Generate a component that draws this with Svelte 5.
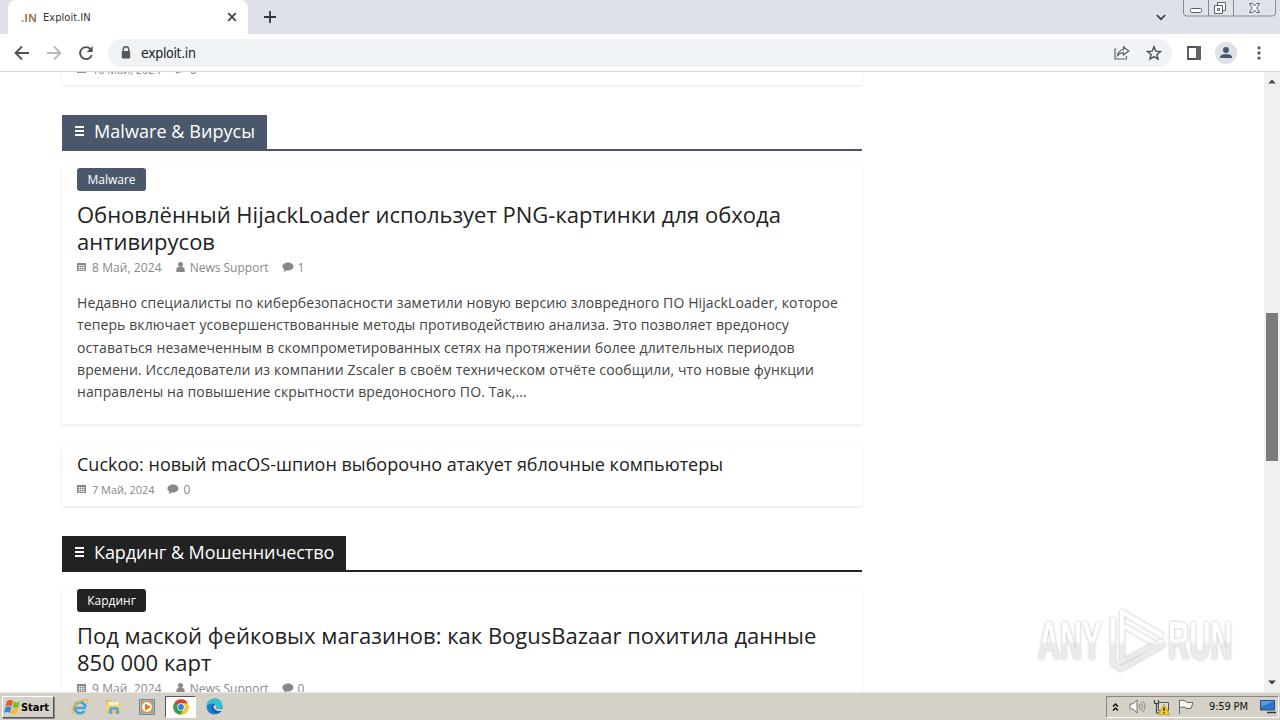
<!--
    Browser window on a remote desktop: tab strip, toolbar,
    scrolled news page and the taskbar below it.
-->
<script>
    const sections = [
        {
            name: 'Malware & Вирусы',
            tone: 'slate',
            tag: 'Malware',
            title: ['Обновлённый HijackLoader использует PNG-картинки для обхода', 'антивирусов'],
            date: '8 Май, 2024',
            comments: 1,
            text: [
                'Недавно специалисты по кибербезопасности заметили новую версию зловредного ПО HijackLoader, которое',
                'теперь включает усовершенствованные методы противодействию анализа. Это позволяет вредоносу',
                'оставаться незамеченным в скомпрометированных сетях на протяжении более длительных периодов',
                'времени. Исследователи из компании Zscaler в своём техническом отчёте сообщили, что новые функции',
                'направлены на повышение скрытности вредоносного ПО. Так,...'
            ],
            next: {
                title: 'Cuckoo: новый macOS-шпион выборочно атакует яблочные компьютеры',
                date: '7 Май, 2024',
                comments: 0
            }
        },
        {
            name: 'Кардинг & Мошенничество',
            tone: 'dark',
            tag: 'Кардинг',
            title: ['Под маской фейковых магазинов: как BogusBazaar похитила данные', '850 000 карт'],
            date: '9 Май, 2024',
            comments: 0,
            text: []
        }
    ];
</script>

{#snippet meta(date, author, comments)}
    <div class="meta">
        <svg class="cal" width="9" height="8" viewBox="0 0 9 8"><path d="M0 0h9v8H0z" fill="#888" /><path d="M1 2.500h7M1 4.500h7M1 6.500h7M2.500 2v5.500M4.500 2v5.500M6.500 2v5.500" stroke="#fff" stroke-width=".5" /></svg>
        <span class="date">{date}</span>
        {#if author}
            <svg class="user" width="9" height="10" viewBox="0 0 9 10"><circle cx="4.500" cy="2.600" r="2.500" fill="#888" /><path d="M.3 10V7.500Q.5 5 2.500 5h4q2 0 2.200 2.500V10z" fill="#888" /></svg>
            <span class="author">{author}</span>
        {/if}
        <svg class="bubble" width="12" height="10" viewBox="0 0 12 10"><path d="M6 .5c3 0 5.500 1.700 5.500 4S9 8.500 6 8.500L4.500 8.400Q3 9.800 1.500 10q1-1 .9-2.300Q.4 6.500.4 4.500C.4 2.200 3 .5 6 .5z" fill="#888" /></svg>
        <span>{comments}</span>
    </div>
{/snippet}

<div class="screen">
    <header class="tabs">
        <div class="tab">
            <span class="favicon">.IN</span>
            <span class="tab-title">Exploit.IN</span>
            <svg width="10" height="10" viewBox="0 0 10 10"><path d="M1.200 1.200l7.600 7.600M8.800 1.200L1.200 8.800" stroke="#3c4043" stroke-width="1.700" /></svg>
        </div>
        <svg class="plus" width="12" height="12" viewBox="0 0 12 12"><path d="M6 0v12M0 6h12" stroke="#33363a" stroke-width="1.800" /></svg>
        <svg class="chevron" width="10" height="7" viewBox="0 0 10 7"><path d="M.8 1L5 5.200 9.200 1" fill="none" stroke="#3c4043" stroke-width="1.700" /></svg>
        <svg class="controls" width="94" height="18" viewBox="0 0 94 18">
            <path d="M.5 0v13q0 3 3 3h86q3 0 3-3V0M25.500 0v16M50.500 0v16" fill="#e0e3e9" stroke="#858b95" />
            <rect x="7.500" y="8.500" width="11" height="4" rx="1" fill="#fff" stroke="#5b626c" />
            <path d="M34.500 2.500h8v8h-8z" fill="#fff" stroke="#5b626c" />
            <path d="M31.500 5.500h8v8h-8z" fill="#fff" stroke="#5b626c" />
            <path d="M34.500 8.500h2v2h-2z" fill="#fff" stroke="#5b626c" />
            <path d="M66.500 3.500h3l2 2.500 2-2.500h3L73.700 8l2.800 4.500h-3l-2-2.500-2 2.500h-3L69.300 8z" fill="#fff" stroke="#5b626c" />
        </svg>
    </header>

    <nav class="toolbar">
        <svg class="back" width="16" height="16" viewBox="0 0 16 16"><path d="M15 8H2M8 1.500L1.600 8 8 14.500" fill="none" stroke="#505357" stroke-width="1.900" /></svg>
        <svg class="forward" width="16" height="16" viewBox="0 0 16 16"><path d="M1 8h13M8 1.500L14.400 8 8 14.500" fill="none" stroke="#b7b9bc" stroke-width="1.800" /></svg>
        <svg class="reload" width="16" height="16" viewBox="0 0 16 16"><path d="M13.800 10A6 6 0 1 1 12.400 3.900" fill="none" stroke="#505357" stroke-width="1.900" /><path d="M14.700 1v6H8.700z" fill="#505357" /></svg>
        <div class="omnibox">
            <svg width="10" height="13" viewBox="0 0 10 13"><path d="M2.300 6V3.500a2.700 2.700 0 0 1 5.400 0V6" fill="none" stroke="#55585d" stroke-width="1.400" /><rect x=".8" y="5" width="8.400" height="7.500" rx="1" fill="#55585d" /></svg>
            <span class="url">exploit.in</span>
            <svg class="share" width="16" height="15" viewBox="0 0 16 15"><path d="M2.500 4H1v10h11.500v-3" fill="none" stroke="#5f6368" stroke-width="1.200" /><path d="M3.500 10.500Q4 5.500 9.500 4.500V1.800l5.300 4.300-5.300 4V7.600Q6 7.500 3.500 10.500z" fill="none" stroke="#5f6368" stroke-width="1.200" /></svg>
            <svg class="star" width="16" height="16" viewBox="0 0 16 16"><path d="M8 1.800l1.800 4.300 4.700.4-3.600 3 1.100 4.600-4-2.500-4 2.500 1.100-4.600-3.600-3 4.700-.4z" fill="none" stroke="#4a4e53" stroke-width="1.400" /></svg>
        </div>
        <svg class="panel" width="14" height="14" viewBox="0 0 14 14"><path d="M1 1h12v12H1z" fill="#fff" stroke="#4e5155" stroke-width="1.800" /><path d="M9 0h5v14H9z" fill="#5f6368" /></svg>
        <svg class="avatar" width="22" height="22" viewBox="0 0 22 22"><circle cx="11" cy="11" r="11" fill="#dee1e6" /><circle cx="11" cy="8" r="3" fill="#4b5672" /><path d="M5 16v-1.500Q6 12 11 12t6 2.500V16z" fill="#4b5672" /></svg>
        <svg class="dots" width="4" height="14" viewBox="0 0 4 14"><path d="M.6.500h2.800v2.800H.6zM.6 5.600h2.800v2.800H.6zM.6 10.700h2.800v2.800H.6z" fill="#55585d" /></svg>
    </nav>

    <div class="viewport">
        <main class="page">
            <article class="card leftover">
                {@render meta('10 Май, 2024', '', 0)}
            </article>
            {#each sections as s}
                <section class={s.tone}>
                    <h3 class="heading">
                        <span class="label">
                            <svg width="9" height="10" viewBox="0 0 9 10"><path d="M0 1h9M0 5h9M0 9h9" stroke="#fff" stroke-width="2" /></svg>
                            <span class="name">{s.name}</span>
                        </span>
                    </h3>
                    <article class="card lead">
                        <span class="tag">{s.tag}</span>
                        <h2>{#each s.title as line}<span class="line">{line}</span>{/each}</h2>
                        {@render meta(s.date, 'News Support', s.comments)}
                        <p>{#each s.text as line}<span class="line">{line}</span>{/each}</p>
                    </article>
                    {#if s.next}
                        <article class="card small">
                            <h4>{s.next.title}</h4>
                            {@render meta(s.next.date, '', s.next.comments)}
                        </article>
                    {/if}
                </section>
            {/each}
        </main>
        <aside class="scrollbar">
            <svg width="8" height="5" viewBox="0 0 8 5"><path d="M0 4.500L4 .5l4 4z" fill="#505050" /></svg>
            <div class="thumb"></div>
            <svg width="8" height="5" viewBox="0 0 8 5"><path d="M0 .5l4 4 4-4z" fill="#404040" /></svg>
        </aside>
        <svg class="watermark" width="210" height="80" viewBox="0 0 210 80">
            <defs>
                <linearGradient id="fade" x1="0" y1="0" x2="0" y2="80" gradientUnits="userSpaceOnUse">
                    <stop offset=".5" stop-color="#fff" />
                    <stop offset=".56" stop-color="#ebebeb" />
                </linearGradient>
            </defs>
            <text x="8" y="59" textLength="64" lengthAdjust="spacingAndGlyphs">ANY</text>
            <text x="138" y="59" textLength="64" lengthAdjust="spacingAndGlyphs">RUN</text>
            <g class="play">
                <path d="M83 19v45l8 5 42-24" />
                <path d="M131 35L92 12v49l39-19M96 27l33 19" />
            </g>
        </svg>
    </div>

    <footer class="taskbar">
        <div class="start">
            <svg width="17" height="16" viewBox="0 0 17 16"><path d="M3 2q3-2 6 0L7.500 7.500q-3-2-6 0z" fill="#e85b25" /><path d="M10 2.500q3 2 6 0L14.500 8q-3 2-6 0z" fill="#78b83b" /><path d="M1.300 8.500q3-2 6 0L6 14q-3-2-6 0z" fill="#3c86d4" /><path d="M8.300 9q3 2 6 0L13 14.500q-3 2-6 0z" fill="#f8bd27" /></svg>
            <b>Start</b>
        </div>
        <svg class="ie" width="18" height="18" viewBox="0 0 18 18"><path d="M14.800 10H5.300M14.500 8.800A5.500 5.500 0 1 0 13.500 13" fill="none" stroke="#39a5dc" stroke-width="2.700" /><path d="M2 15.500C-1 14 3 6 10 3s8-1 6 2.500" fill="none" stroke="#e8b53a" stroke-width="1.400" /></svg>
        <svg class="folder" width="17" height="17" viewBox="0 0 17 17"><path d="M1 2h5l1.500 2H15v11H1z" fill="#dfc066" /><path d="M3 4h11v5H3z" fill="#faf2c7" /><path d="M1 7h15v6H1z" fill="#f2d578" /><path d="M4 16v-5q0-2 2-2h6q2 0 2 2v5h-3v-4H7v4z" fill="#62acd4" /></svg>
        <svg class="media" width="16" height="16" viewBox="0 0 16 16"><path d="M.5.500h15v15H.5z" fill="#89bde2" stroke="#578eb9" /><path d="M2 2h12v12H2z" fill="#f18a20" /><circle cx="8" cy="8" r="5" fill="#fff" /><path d="M6 4.500v7L12 8z" fill="#ed7716" /></svg>
        <div class="active">
            <svg width="16" height="16" viewBox="0 0 16 16"><circle cx="8" cy="8" r="7.700" fill="#e5b723" /><path d="M8 8L1.300 4.100A7.700 7.700 0 0 1 14.800 4.400H8z" fill="#d94335" /><path d="M1.300 4.100A7.700 7.700 0 0 0 7.500 15.700L11 9.800 8 8z" fill="#319e50" /><path d="M8 4.400h6.800A7.700 7.700 0 0 1 7.500 15.700L11.200 9.800z" fill="#f6c534" /><circle cx="8" cy="8" r="3.700" fill="#fff" /><circle cx="8" cy="8" r="2.900" fill="#397fe0" /></svg>
        </div>
        <svg class="edge" width="17" height="17" viewBox="0 0 17 17"><circle cx="8.500" cy="8.500" r="8" fill="#1680cf" /><path d="M.7 7C2-1.500 16-1.500 16.400 7q0 4-4.400 4-3 0-2-2.500Q10 6 7 5.500 3 5 .7 8z" fill="#36bfcf" /><path d="M7.500 6Q3 10 8.500 14.500l5 .3q2-1.300 2.500-3-3 2-6 .5T8 8z" fill="#155aab" /><path d="M8 7.500q1.500-1 2.300.4Q9 10.500 11.700 11H16v1.800q-4.500 1-7-1.300T8 7.500z" fill="#d6d3cc" /></svg>
        <div class="tray">
            <svg width="7" height="10" viewBox="0 0 7 10"><path d="M1 4.500L3.500 2 6 4.500M1 8.500L3.500 6 6 8.500" fill="none" stroke="#111" stroke-width="1.500" /></svg>
            <svg class="sound" width="17" height="15" viewBox="0 0 17 15"><path d="M1 5h3l4-4v13l-4-4H1z" fill="#fafafa" stroke="#777" /><path d="M10 5q1.500 2.500 0 5M12 3.500q3 4 0 8M14 2q4 5.500 0 11" fill="none" stroke="#888" /></svg>
            <svg class="net" width="17" height="16" viewBox="0 0 17 16"><path d="M5.500 3.500h10v8h-10z" fill="#d9dde0" stroke="#555" /><path d="M1.500 1v3.500h4V1M3.500 5v9h4" fill="none" stroke="#444" stroke-width="1.200" /><path d="M11 5l5.500 10.500h-11z" fill="#f6cd27" stroke="#bb9212" stroke-width=".7" /><path d="M11 8.500V12M11 13v1.300" stroke="#222" stroke-width="1.300" /></svg>
            <svg class="flag" width="17" height="16" viewBox="0 0 17 16"><path d="M1.500 1v14M2 1.500q3-1 5 .5t3 1.500h5l-2 6H9Q7 7 2 8.500" fill="#f6f6f4" stroke="#666" /></svg>
            <span class="clock">9:59 PM</span>
            <svg class="desk" width="16" height="14" viewBox="0 0 16 14"><path d="M.5.500h14v9.500H.5z" fill="#2f73c5" stroke="#244f86" /><path d="M1 1h13L1 7z" fill="#5c9ae0" /><path d="M7 12.500h9" stroke="#333" stroke-width="1.500" /></svg>
        </div>
    </footer>
</div>

<style>
    :global(body) { background: #fff; }

    .screen {
        display:        flex;
        flex-direction: column;
        width:          1280px;
        height:         720px;
        overflow:       hidden;
        font-family:    "Open Sans", sans-serif;
    }

    svg { display: block; flex: none; }
    span, b { white-space: nowrap; }

    .tabs {
        display:    flex;
        height:     34px;
        background: #dee1e8;
        flex:       none;
    }

    .tab {
        display:       flex;
        align-items:   center;
        box-sizing:    border-box;
        width:         240px;
        margin-left:   8px;
        padding:       0 11px 0 13px;
        border-radius: 8px 8px 0 0;
        background:    #fff;
    }

    .favicon {
        width:          22px;
        color:          #9a7854;
        font:           bold 11px "Open Sans", sans-serif;
        letter-spacing: .1px;
    }

    .tab-title {
        flex:           1;
        color:          #333;
        font:           11px "DejaVu Sans Condensed", "DejaVu Sans", sans-serif;
        letter-spacing: .05px;
    }

    .plus     { margin: 11px 0 0 16px; }
    .chevron  { margin: 14px 0 0 880px; }
    .controls { margin-left: 17px; }

    .toolbar {
        display:       flex;
        align-items:   center;
        box-sizing:    border-box;
        height:        38px;
        padding-left:  14px;
        border-bottom: 1px solid #d5d7da;
        background:    #fff;
        flex:          none;
    }

    .forward, .reload { margin-left: 16px; }

    .omnibox {
        display:       flex;
        align-items:   center;
        box-sizing:    border-box;
        width:         1064px;
        height:        28px;
        margin-left:   14px;
        padding:       0 10px 0 13px;
        border-radius: 14px;
        background:    #f0f3f5;
    }

    .url {
        flex:           1;
        margin-left:    10px;
        color:          #202124;
        font:           14px "DejaVu Sans Condensed", "DejaVu Sans", sans-serif;
        letter-spacing: -.35px;
    }

    .star   { margin-left: 16px; }
    .panel  { margin-left: 15px; }
    .avatar { margin-left: 14px; }
    .dots   { margin-left: 20px; }

    .viewport {
        position:        relative;
        display:         flex;
        justify-content: space-between;
        height:          620px;
        overflow:        hidden;
        flex:            none;
    }

    .page { width: 800px; margin-left: 62px; }

    .card {
        box-sizing: border-box;
        padding:    0 15px;
        box-shadow: 0 1px 3px rgba(0, 0, 0, .1);
    }

    .leftover { height: 13px; }

    .heading {
        display:       flex;
        box-sizing:    border-box;
        height:        36px;
        margin:        30px 0 17px;
        border-bottom: 2px solid var(--tone);
    }

    .slate { --tone: #4b586b; }
    .dark  { --tone: #222; }

    .label {
        display:     flex;
        align-items: center;
        box-sizing:  border-box;
        height:      34px;
        padding:     0 12px 2px 13px;
        background:  var(--tone);
        color:       #fff;
        font:        400 18px "Open Sans", sans-serif;
    }

    .name         { margin-left: 10px; }
    .slate .name  { letter-spacing: .06px; }
    .dark .name   { letter-spacing: -.08px; }

    .lead { height: 256px; }

    .tag {
        display:        inline-block;
        box-sizing:     border-box;
        width:          69px;
        height:         23px;
        border-radius:  3px;
        background:     var(--tone);
        color:          #fff;
        font-size:      12px;
        line-height:    23px;
        text-align:     center;
        vertical-align: top;
    }

    h2 {
        margin:      10px 0 0;
        color:       #222;
        font-size:   22px;
        font-weight: 400;
        line-height: 27px;
    }

    .line { display: block; width: max-content; }

    .meta {
        display:     flex;
        align-items: center;
        height:      20px;
        color:       #888;
        font-size:   12px;
    }

    h2 + .meta    { margin-top: 2px; }
    .date         { margin-left: 6px; letter-spacing: .08px; }
    .user         { margin-left: 14px; }
    .author       { margin-left: 5px; }
    .bubble       { margin: 0 4px 0 13px; }

    .small .date, .leftover .date { font-size: 11px; letter-spacing: -.05px; }
    .leftover .meta { margin-top: -13px; }
    .leftover { overflow: visible; display: flex; align-items: flex-start; }

    p {
        margin:         15px 0 0;
        color:          #444;
        font-size:      14px;
        line-height:    22.3px;
        letter-spacing: .105px;
    }

    .small { height: 61px; margin-top: 21px; }
    .small .meta { margin-top: 2px; }

    h4 {
        width:       max-content;
        margin:      0;
        padding-top: 7px;
        color:       #222;
        font-size:   18px;
        font-weight: 400;
        line-height: 25px;
        white-space: nowrap;
    }

    .scrollbar {
        display:        flex;
        flex-direction: column;
        align-items:    center;
        box-sizing:     border-box;
        width:          16px;
        padding:        7px 0;
        background:     #f1f1f1;
    }

    .thumb {
        width:      12px;
        height:     148px;
        margin:     229px 0 auto;
        background: #7b7b7b;
    }

    .watermark {
        position: absolute;
        top:      528px;
        left:     1030px;
        filter:   drop-shadow(0 0 1.5px #bbb);
    }

    .watermark text {
        fill:        url(#fade);
        font-family: "Liberation Sans", sans-serif;
        font-size:   53px;
        font-weight: 700;
    }

    .play path {
        fill:            none;
        stroke:          url(#fade);
        stroke-width:    4.5;
        stroke-linejoin: round;
        stroke-linecap:  round;
    }

    .taskbar {
        display:     flex;
        align-items: center;
        box-sizing:  border-box;
        height:      28px;
        border-top:  1px solid #e8e6e0;
        background:  #d5d1c9;
        flex:        none;
    }

    .start {
        display:        flex;
        align-items:    center;
        box-sizing:     border-box;
        width:          52px;
        height:         22px;
        margin:         1px 0 0 2px;
        padding-left:   1px;
        border:         1px solid;
        border-color:   #fff #555 #555 #fff;
        box-shadow:     1px 1px #888;
        font:           bold 11px "DejaVu Sans Condensed", sans-serif;
        letter-spacing: -.05px;
    }

    .ie     { margin-left: 17px; }
    .folder { margin-left: 16px; }
    .media  { margin-left: 17px; }

    .active {
        display:      grid;
        place-items:  center;
        box-sizing:   border-box;
        width:        31px;
        height:       22px;
        margin-left:  10px;
        border:       1px solid;
        border-color: #555 #fff #fff #555;
        background:   #fff;
    }

    .edge { margin-left: 10px; }

    .tray {
        display:      flex;
        align-items:  center;
        box-sizing:   border-box;
        width:        173px;
        height:       22px;
        margin-left:  auto;
        margin-right: 1px;
        padding-left: 5px;
        border:       1px solid;
        border-color: #888 #fff #fff #888;
    }

    .sound { margin-left: 10px; }
    .net   { margin-left: 7px; }
    .flag  { margin-left: 8px; }

    .clock {
        width:          40px;
        margin-left:    14px;
        color:          #111;
        font:           11px "DejaVu Sans Condensed", sans-serif;
        letter-spacing: -.15px;
    }

    .desk { margin-left: 11px; }
</style>
